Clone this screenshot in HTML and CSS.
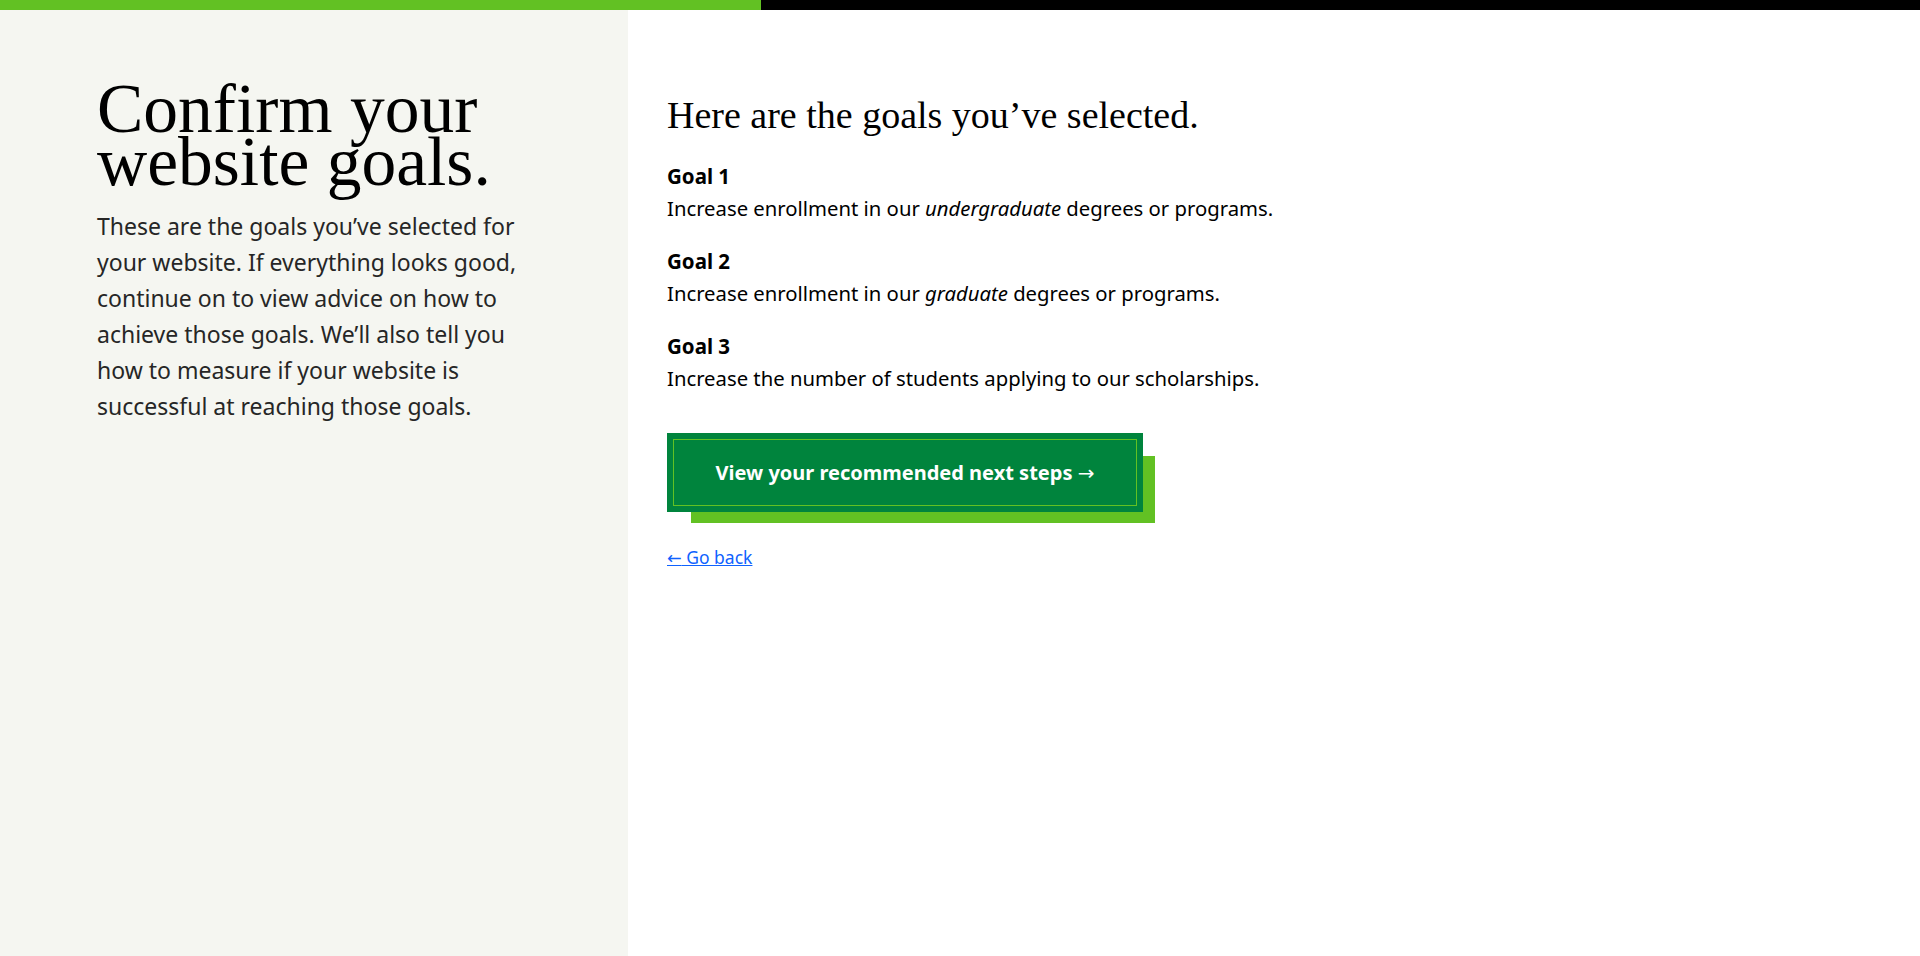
FILE: index.html
```html
<!DOCTYPE html>
<html lang="en">
<head>
  <meta charset="UTF-8" />
  <meta name="viewport" content="width=device-width, initial-scale=1.0" />
  <title>Confirm your website goals</title>
  <link rel="stylesheet" href="styles.css">
</head>

<body>
  <!-- Progress bar -->
  <div class="progress">
    <div class="progress-fill"></div>
  </div>

  <div class="layout">
    <!-- Intro column -->
    <aside class="intro">
      <h1 class="intro-title">Confirm your website goals.</h1>
      <p class="intro-text">These are the goals you’ve selected for your website. If everything looks good, continue on to view advice on how to achieve those goals. We’ll also tell you how to measure if your website is successful at reaching those goals.</p>
    </aside>

    <!-- Selected goals -->
    <main class="goals">
      <h2 class="goals-title">Here are the goals you’ve selected.</h2>

      <div class="goal">
        <h3 class="goal-name">Goal 1</h3>
        <p class="goal-text">Increase enrollment in our <em>undergraduate</em> degrees or programs.</p>
      </div>
      <div class="goal">
        <h3 class="goal-name">Goal 2</h3>
        <p class="goal-text">Increase enrollment in our <em>graduate</em> degrees or programs.</p>
      </div>
      <div class="goal">
        <h3 class="goal-name">Goal 3</h3>
        <p class="goal-text">Increase the number of students applying to our scholarships.</p>
      </div>

      <a class="next-button" href="#">View your recommended next steps <span class="arrow">→</span></a>

      <a class="back-link" href="#"><span class="arrow">←</span> Go back</a>
    </main>
  </div>
</body>
</html>
```

FILE: styles.css
```css
body {
  margin: 0;
  font-family: "Noto Sans", Arial, sans-serif;
  color: #161616;
  background-color: #fff;
}

.progress {
  height: 10px;
  background-color: #000;
}

.progress-fill {
  width: 761px;
  height: 100%;
  background-color: #62c123;
}

.layout {
  display: flex;
  min-height: calc(100vh - 10px);
}

.intro {
  width: 628px;
  flex-shrink: 0;
  box-sizing: border-box;
  padding: 72px 40px 0 97px;
  background-color: #f5f6f1;
}

.intro-title {
  margin: 0 0 20px;
  font-family: "Liberation Serif", "Times New Roman", serif;
  font-weight: 400;
  font-size: 69.5px;
  line-height: 53px;
  color: #000;
}

.intro-text {
  margin: 0;
  max-width: 440px;
  font-size: 23px;
  line-height: 36px;
  color: #262626;
}

.goals {
  padding: 80px 0 0 39px;
}

.goals-title {
  margin: 0 0 20px;
  font-family: "Liberation Serif", "Times New Roman", serif;
  font-weight: 400;
  font-size: 38px;
  line-height: 50px;
  color: #000;
}

.goal {
  margin-bottom: 21px;
}

.goal-name {
  margin: 0;
  font-size: 20.5px;
  font-weight: 700;
  line-height: 32px;
  color: #000;
}

.goal-text {
  margin: 0;
  font-size: 20.3px;
  line-height: 32px;
  color: #000;
}

.arrow {
  font-family: "DejaVu Sans", sans-serif;
  font-weight: 400;
}

.next-button {
  display: block;
  width: 476px;
  height: 79px;
  box-sizing: border-box;
  margin-top: 39px;
  border: 6px solid #00843d;
  outline: 1px solid #62c123;
  outline-offset: -7px;
  background-color: #00843d;
  box-shadow: 18px 17px 0 -6px #62c123;
  color: #fff;
  font-size: 20px;
  font-weight: 700;
  line-height: 67px;
  text-align: center;
  text-decoration: none;
}

.back-link {
  display: block;
  width: fit-content;
  margin-top: 33px;
  font-size: 17.5px;
  color: #0f62fe;
}
```
